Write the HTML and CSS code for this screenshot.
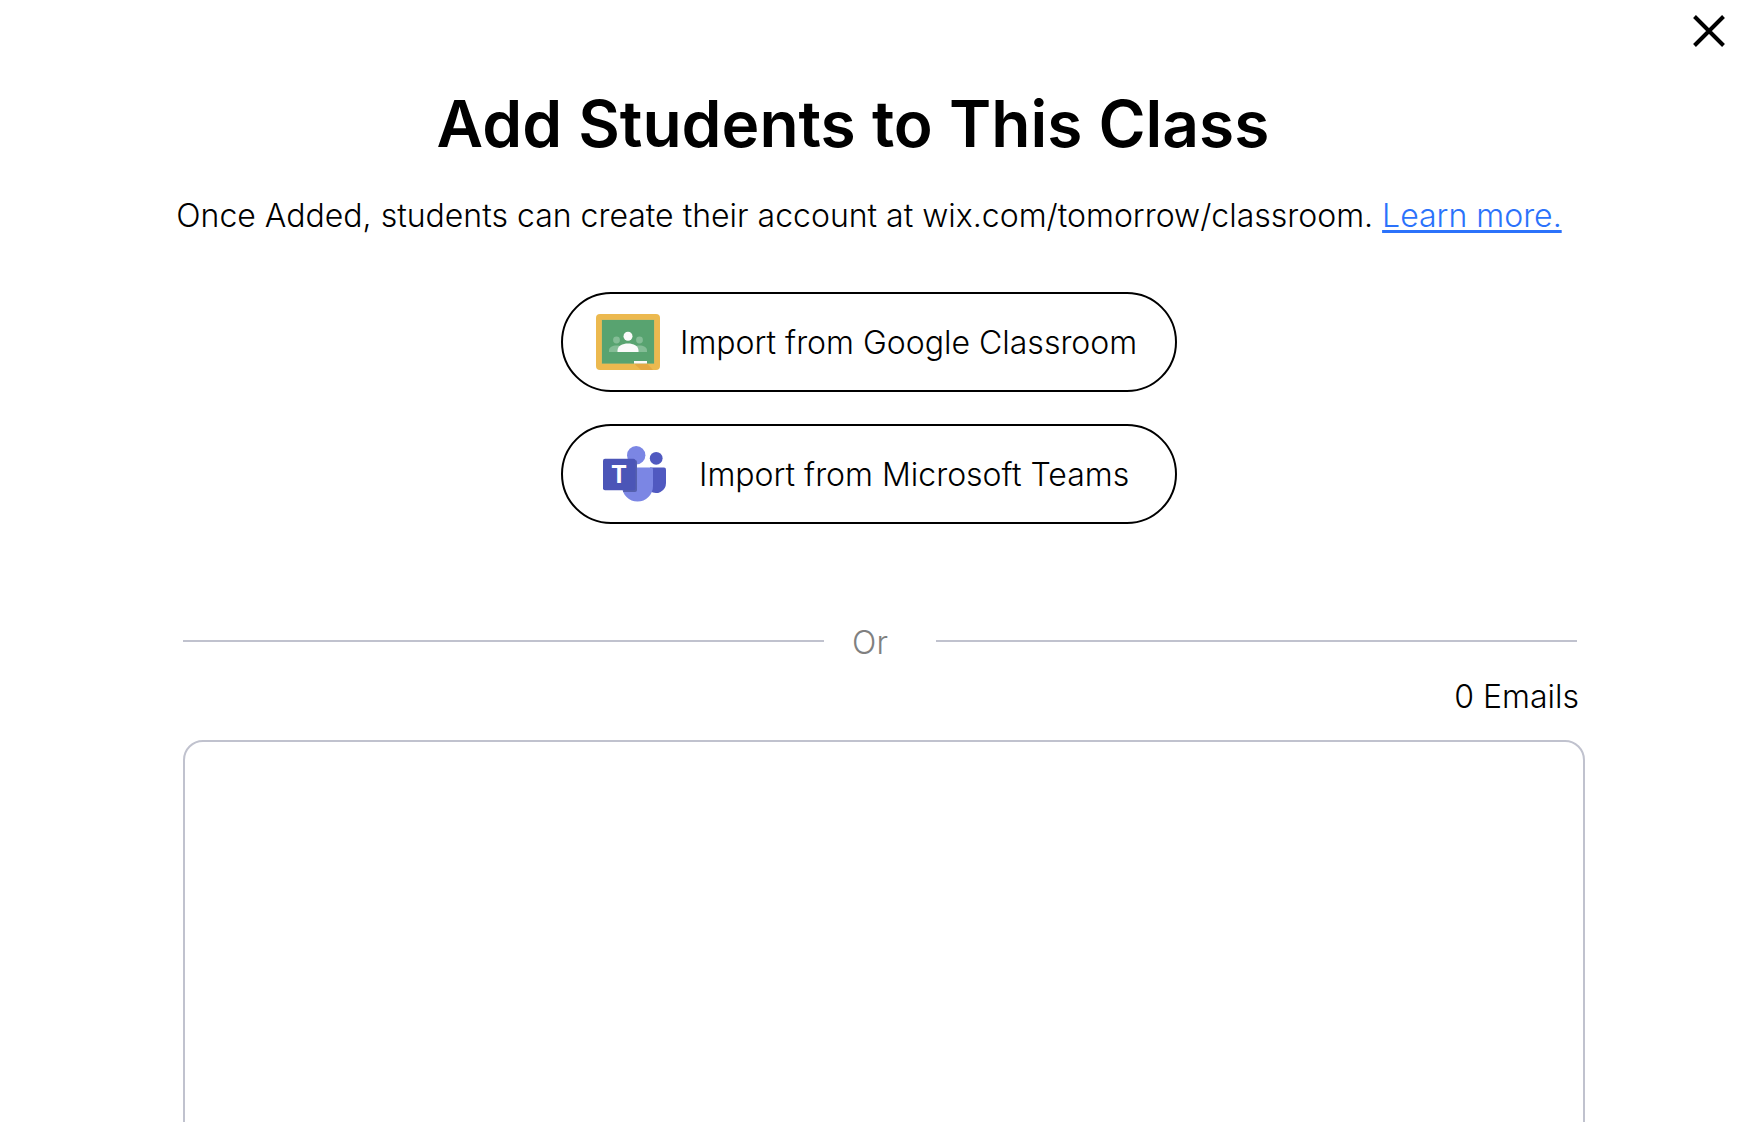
FILE: index.html
```
<!DOCTYPE html>
<html lang="en">
<head>
    <meta charset="UTF-8">
    <meta name="viewport" content="width=device-width, initial-scale=1.0">
    <title>Add Students to This Class</title>
    <link rel="stylesheet" href="styles.css">
</head>
<body>
    <div class="top-bar">
        <button type="button" class="close-btn" aria-label="Close">
            <svg width="32" height="32" viewBox="0 0 32 32" fill="none" stroke="#000" stroke-width="4">
                <path d="M1.5 1.5 30.5 30.5M30.5 1.5 1.5 30.5"/>
            </svg>
        </button>
    </div>

    <main class="container">
        <div class="intro">
            <h1>Add Students to This Class</h1>
            <p>Once Added, students can create their account at wix.com/tomorrow/classroom. <a href="#">Learn more.</a></p>
            <div class="import-buttons">
                <button type="button" class="import-btn">
                    <svg width="64" height="56" viewBox="0 0 64 56">
                        <rect width="64" height="56" rx="4" fill="#ecb94f"/>
                        <rect x="5.5" y="5.5" width="53" height="44.5" fill="#c9b966"/>
                        <rect x="6" y="6" width="52" height="43.5" fill="#58a370"/>
                        <g fill="#84bd96">
                            <circle cx="20.5" cy="26" r="3.4"/>
                            <circle cx="43.5" cy="26" r="3.4"/>
                            <path d="M13 38v-1.5c0-3.5 3.5-5 7.5-5s7.5 1.5 7.5 5V38z"/>
                            <path d="M36 38v-1.5c0-3.5 3.5-5 7.5-5s7.5 1.5 7.5 5V38z"/>
                        </g>
                        <g fill="#fafafa">
                            <circle cx="32" cy="22.2" r="4.5"/>
                            <path d="M21.5 38v-1.5c0-4.5 5-7 10.5-7s10.500 2.500 10.500 7V38z"/>
                        </g>
                        <path d="M38 49.5h13l6 6.5H45z" fill="#e4a843"/>
                        <rect x="38" y="47" width="13" height="2.5" fill="#fafafa"/>
                    </svg>
                    <span>Import from Google Classroom</span>
                </button>
                <button type="button" class="import-btn teams">
                    <svg width="64" height="56" viewBox="0 0 64 56">
                        <circle cx="53.2" cy="12.300" r="6.4" fill="#5059c0"/>
                        <path d="M47 21.5h14a2 2 0 0 1 2 2V37a10 10 0 0 1-16 8z" fill="#5059c0"/>
                        <circle cx="33.2" cy="9.2" r="9.2" fill="#7b86e4"/>
                        <path d="M20 21.5h28a2 2 0 0 1 2 2V40a15.500 15.500 0 0 1-31 0z" fill="#7b86e4"/>
                        <path d="M24 14h8a2 2 0 0 1 2 2v28a2 2 0 0 1-2 2H20z" fill="#5560ae"/>
                        <rect y="12.7" width="32.500" height="31.500" rx="2" fill="#4b55b7"/>
                        <text x="16" y="37" class="teams-letter">T</text>
                    </svg>
                    <span>Import from Microsoft Teams</span>
                </button>
            </div>
        </div>

        <div class="divider"><span>Or</span></div>

        <form class="email-form">
            <label for="emails">0 Emails</label>
            <textarea id="emails"></textarea>
        </form>
    </main>
</body>
</html>
```
FILE: styles.css
```
:root {
    --text: #000;
    --line: #c0c2ce;
    --link: #2b72fb;
}

* {
    box-sizing: border-box;
}

body {
    margin: 0;
    height: 100vh;
    overflow: hidden;
    background: #fff;
    color: var(--text);
    font-family: Inter, "Liberation Sans", sans-serif;
    font-size: 32px;
    font-weight: 300;
    line-height: 40px;
}

button {
    font: inherit;
    color: inherit;
    background: none;
    cursor: pointer;
}

svg {
    display: block;
    flex-shrink: 0;
}

.top-bar {
    display: flex;
    justify-content: flex-end;
    padding: 15px 25px 37px;
}

.close-btn {
    padding: 0;
    border: none;
}

.container {
    padding: 0 165px;
}

.intro {
    display: flex;
    flex-direction: column;
    align-items: center;
    padding-right: 12px;
    text-align: center;
}

h1 {
    margin: 0;
    padding-right: 32px;
    font-size: 64px;
    font-weight: 600;
    line-height: 80px;
}

p {
    margin: 32px 0 56px;
}

a {
    color: var(--link);
    text-decoration-thickness: 3px;
    text-underline-offset: 3px;
    text-decoration-skip-ink: none;
}

.import-buttons {
    display: flex;
    flex-direction: column;
    gap: 32px;
    width: 100%;
    max-width: 616px;
}

.import-btn {
    display: flex;
    align-items: center;
    gap: 20px;
    height: 100px;
    padding: 0 33px;
    border: 2px solid var(--text);
    border-radius: 50px;
}

.import-btn span {
    padding-top: 2px;
}

.import-btn.teams {
    gap: 32px;
    padding: 0 40px;
}

.teams-letter {
    fill: #fff;
    font-size: 24px;
    font-weight: 700;
    text-anchor: middle;
}

.divider {
    display: flex;
    align-items: center;
    margin: 95px 8px 14px 18px;
    color: #808080;
}

.divider::before,
.divider::after {
    content: "";
    flex: 1;
    height: 2px;
    background: var(--line);
}

.divider span {
    padding: 4px 48px 0 28px;
}

.email-form {
    display: flex;
    flex-direction: column;
    margin-left: 18px;
}

label {
    margin: 0 6px 23px;
    text-align: right;
}

textarea {
    height: 440px;
    padding: 16px;
    border: 2px solid var(--line);
    border-radius: 20px;
    outline: none;
    resize: none;
    font: inherit;
}
```
